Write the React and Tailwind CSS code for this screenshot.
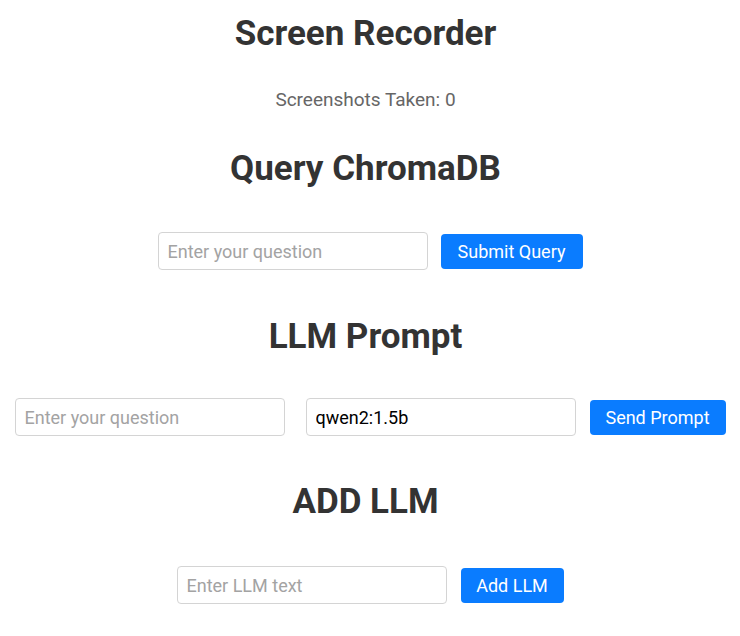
const font = { fontFamily: "Roboto, 'Liberation Sans', sans-serif" };

const Field = ({ placeholder, value }) => (
  <input
    type="text"
    placeholder={placeholder}
    defaultValue={value}
    className="w-[270px] h-[38px] px-[9px] border border-[#d4d4d4] rounded-[4px] text-[18px] text-black placeholder:text-[#a3a3a3] outline-none"
  />
);

const Button = ({ children, className }) => (
  <button className={`h-[35px] bg-[#0a7cff] text-white text-[18px] rounded-[4px] ${className}`}>
    {children}
  </button>
);

export default function App() {
  return (
    <div className="w-[740px] h-[636px] bg-white flex flex-col items-center text-[#333]" style={font}>
      <h1 className="mt-[14px] text-[35px] leading-[40px] font-bold pr-[9px]">Screen Recorder</h1>
      <p className="mt-[36px] text-[19px] text-[#666] leading-[20px] pr-[9px]">Screenshots Taken: 0</p>
      <h2 className="mt-[39px] text-[35px] leading-[40px] font-bold pr-[9px]">Query ChromaDB</h2>

      <div className="mt-[43px] flex items-center gap-[13px]">
        <Field placeholder="Enter your question" />
        <Button className="w-[142px]">Submit Query</Button>
      </div>

      <h2 className="mt-[47px] text-[35px] leading-[40px] font-bold pr-[9px]">LLM Prompt</h2>

      <div className="mt-[41px] flex items-center">
        <Field placeholder="Enter your question" />
        <div className="w-[21px]" />
        <Field value="qwen2:1.5b" />
        <div className="w-[14px]" />
        <Button className="w-[136px]">Send Prompt</Button>
      </div>

      <h2 className="mt-[46px] text-[35px] leading-[40px] font-bold pr-[9px]">ADD LLM</h2>

      <div className="mt-[44px] flex items-center gap-[14px]">
        <Field placeholder="Enter LLM text" />
        <Button className="w-[103px]">Add LLM</Button>
      </div>
    </div>
  );
}
